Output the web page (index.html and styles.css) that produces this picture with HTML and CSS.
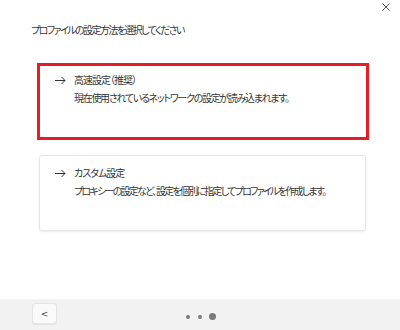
FILE: index.html
```html
<!DOCTYPE html>
<html lang="ja">
<head>
<meta charset="utf-8">
<link rel="stylesheet" href="styles.css">
</head>
<body>
<div class="page">
  <div class="main">
    <div class="topbar">
      <svg class="close" width="8" height="8" viewBox="0 0 8 8"><path d="M0.5 0.5L7.5 7.5M7.5 0.5L0.5 7.5" stroke="#555" stroke-width="1" fill="none"/></svg>
    </div>
    <div class="title">プロファイルの設定方法を選択してください</div>
    <div class="cards">
      <div class="card card-selected">
        <div class="row">
          <svg class="arrow" width="11" height="9" viewBox="0 0 11 9"><path d="M0 4.5H10M6.5 1L10 4.5L6.5 8" stroke="#333" stroke-width="1" fill="none"/></svg>
          <span class="card-title">高速設定（推奨）</span>
        </div>
        <div class="card-desc">現在使用されているネットワークの設定が読み込まれます。</div>
      </div>
      <div class="card card-plain">
        <div class="row">
          <svg class="arrow" width="11" height="9" viewBox="0 0 11 9"><path d="M0 4.5H10M6.5 1L10 4.5L6.5 8" stroke="#333" stroke-width="1" fill="none"/></svg>
          <span class="card-title">カスタム設定</span>
        </div>
        <div class="card-desc card-desc-tight">プロキシーの設定など、 設定を個別に指定してプロファイルを作成します。</div>
      </div>
    </div>
  </div>
  <div class="footer">
    <button class="back">&lt;</button>
    <div class="dots">
      <span class="dot"></span>
      <span class="dot"></span>
      <span class="dot dot-active"></span>
    </div>
  </div>
</div>
</body>
</html>
```
FILE: styles.css
```css
* { box-sizing: border-box; }
html, body { margin: 0; padding: 0; }
body {
  width: 400px;
  height: 330px;
  background: #fff;
  font-family: "Noto Sans CJK JP", "Noto Sans", sans-serif;
  font-feature-settings: "palt";
  color: #333;
  overflow: hidden;
}
.page {
  display: flex;
  flex-direction: column;
  height: 330px;
}
.main {
  flex: 1;
  display: flex;
  flex-direction: column;
}
.topbar {
  display: flex;
  justify-content: flex-end;
  padding: 3px 10px 0 0;
  height: 22px;
}
.close { display: block; }
.title {
  font-size: 10px;
  letter-spacing: -1.6px;
  line-height: 16px;
  padding-left: 31px;
}
.cards {
  display: flex;
  flex-direction: column;
  align-items: flex-start;
  gap: 15px;
  margin-top: 25px;
}
.card {
  background: #fff;
  white-space: nowrap;
}
.card-selected {
  margin-left: 37px;
  width: 332px;
  height: 77px;
  border: 3px solid #e81c24;
  padding: 6px 0 0 15px;
}
.card-plain {
  margin-left: 39px;
  width: 327px;
  height: 76px;
  border: 1px solid #e6e6e6;
  border-radius: 3px;
  box-shadow: 0 1px 2px rgba(0,0,0,0.08);
  padding: 9px 0 0 15px;
}
.row {
  display: flex;
  align-items: center;
  gap: 8px;
  height: 16px;
}
.arrow { display: block; }
.card-title {
  font-size: 10px;
  letter-spacing: -1px;
  line-height: 16px;
}
.card-desc {
  font-size: 10px;
  letter-spacing: -1.3px;
  line-height: 16px;
  margin-top: 2px;
  padding-left: 19px;
}
.card-desc-tight {
  letter-spacing: -1.75px;
}
.footer {
  height: 31px;
  background: #f2f2f2;
  display: flex;
  align-items: center;
  padding-left: 32px;
}
.back {
  width: 25px;
  height: 21px;
  margin-top: -2px;
  background: #fafafa;
  border: 1px solid #e4e4e4;
  border-radius: 3px;
  box-shadow: 0 1px 1px rgba(0,0,0,0.06);
  font-family: "DejaVu Sans", sans-serif;
  font-size: 9px;
  color: #444;
  padding: 0;
}
.dots {
  display: flex;
  align-items: center;
  gap: 8px;
  margin-left: 129px;
  margin-top: 4px;
}
.dot {
  width: 4px;
  height: 4px;
  border-radius: 50%;
  background: #7a7a7a;
}
.dot-active {
  width: 7px;
  height: 7px;
  margin-left: -1px;
}
```
